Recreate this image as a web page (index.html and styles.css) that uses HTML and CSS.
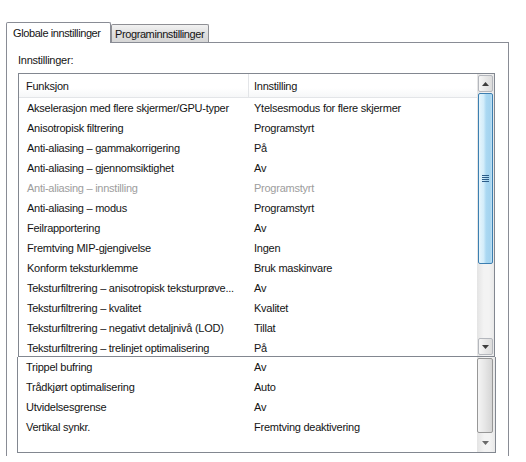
FILE: index.html
```html
<!DOCTYPE html>
<html>
<head>
<meta charset="utf-8">
<link rel="stylesheet" href="styles.css">
</head>
<body>
<div class="dialog">
  <div class="tabs">
    <div class="tab active">Globale innstillinger</div>
    <div class="tab inactive">Programinnstillinger</div>
  </div>
  <div class="panel">
    <div class="label">Innstillinger:</div>
    <div class="listbox main">
      <div class="list-body">
        <div class="list-head">
          <div class="hcell c1">Funksjon</div>
          <div class="hcell c2">Innstilling</div>
        </div>
        <div class="row"><span class="c1">Akselerasjon med flere skjermer/GPU-typer</span><span class="c2">Ytelsesmodus for flere skjermer</span></div>
        <div class="row"><span class="c1">Anisotropisk filtrering</span><span class="c2">Programstyrt</span></div>
        <div class="row"><span class="c1">Anti-aliasing – gammakorrigering</span><span class="c2">På</span></div>
        <div class="row"><span class="c1">Anti-aliasing – gjennomsiktighet</span><span class="c2">Av</span></div>
        <div class="row disabled"><span class="c1">Anti-aliasing – innstilling</span><span class="c2">Programstyrt</span></div>
        <div class="row"><span class="c1">Anti-aliasing – modus</span><span class="c2">Programstyrt</span></div>
        <div class="row"><span class="c1">Feilrapportering</span><span class="c2">Av</span></div>
        <div class="row"><span class="c1">Fremtving MIP-gjengivelse</span><span class="c2">Ingen</span></div>
        <div class="row"><span class="c1">Konform teksturklemme</span><span class="c2">Bruk maskinvare</span></div>
        <div class="row"><span class="c1">Teksturfiltrering – anisotropisk teksturprøve...</span><span class="c2">Av</span></div>
        <div class="row"><span class="c1">Teksturfiltrering – kvalitet</span><span class="c2">Kvalitet</span></div>
        <div class="row"><span class="c1">Teksturfiltrering – negativt detaljnivå (LOD)</span><span class="c2">Tillat</span></div>
        <div class="row"><span class="c1">Teksturfiltrering – trelinjet optimalisering</span><span class="c2">På</span></div>
      </div>
      <div class="scrollbar">
        <div class="sb-btn">
          <svg width="7" height="4" viewBox="0 0 7 4"><polygon points="0,4 7,4 3.5,0" fill="#3d3d3d"/></svg>
        </div>
        <div class="thumb blue">
          <svg width="7" height="7" viewBox="0 0 7 7">
            <rect x="0" y="0" width="7" height="1" fill="#2c5d89"/>
            <rect x="0" y="2" width="7" height="1" fill="#2c5d89"/>
            <rect x="0" y="4" width="7" height="1" fill="#2c5d89"/>
            <rect x="0" y="6" width="7" height="1" fill="#2c5d89"/>
          </svg>
        </div>
        <div class="sb-track"></div>
        <div class="sb-btn">
          <svg width="7" height="4" viewBox="0 0 7 4"><polygon points="0,0 7,0 3.5,4" fill="#3d3d3d"/></svg>
        </div>
      </div>
    </div>
    <div class="listbox lower">
      <div class="list-body">
        <div class="row"><span class="c1">Trippel bufring</span><span class="c2">Av</span></div>
        <div class="row"><span class="c1">Trådkjørt optimalisering</span><span class="c2">Auto</span></div>
        <div class="row"><span class="c1">Utvidelsesgrense</span><span class="c2">Av</span></div>
        <div class="row"><span class="c1">Vertikal synkr.</span><span class="c2">Fremtving deaktivering</span></div>
      </div>
      <div class="scrollbar">
        <div class="thumb gray"></div>
        <div class="sb-track"></div>
        <div class="sb-btn flat">
          <svg width="7" height="4" viewBox="0 0 7 4"><polygon points="0,0 7,0 3.5,4" fill="#6a6a6a"/></svg>
        </div>
      </div>
    </div>
  </div>
</div>
</body>
</html>
```

FILE: styles.css
```css
* {
  box-sizing: border-box;
}

body {
  margin: 0;
  background: #ffffff;
  font-family: "Liberation Sans", Arial, sans-serif;
  font-size: 11px;
  letter-spacing: -0.25px;
  color: #141414;
}

.dialog {
  padding: 22px 0 0 6px;
  width: 509px;
}

.tabs {
  display: flex;
  align-items: flex-end;
  height: 20px;
}

.tab {
  border: 1px solid #898c95;
  border-bottom: none;
  white-space: nowrap;
  letter-spacing: -0.4px;
}

.tab.active {
  position: relative;
  z-index: 1;
  width: 105px;
  height: 21px;
  margin-bottom: -1px;
  padding-left: 6px;
  line-height: 20px;
  background: #ffffff;
  border-radius: 2px 2px 0 0;
}

.tab.inactive {
  width: 98px;
  height: 18px;
  padding-left: 3px;
  line-height: 18px;
  background: linear-gradient(#f2f2f2, #e0e0e0 50%, #d6d6d6);
  border-color: #8e8f94;
  border-radius: 2px 2px 0 0;
}

.panel {
  width: 503px;
  border: 1px solid #898c95;
  border-bottom: none;
  padding: 10px 0 3px 11px;
  background: #ffffff;
}

.label {
  height: 15px;
  line-height: 15px;
  margin-bottom: 5px;
}

.listbox {
  display: flex;
  border: 1px solid #828790;
  background: #ffffff;
}

.listbox.main {
  width: 477px;
  height: 284px;
}

.listbox.lower {
  width: 479px;
  height: 96px;
  margin-left: -1px;
  border-top: none;
}

.list-body {
  flex: 1;
  overflow: hidden;
}

.list-head {
  display: grid;
  grid-template-columns: 229px 229px;
  height: 24px;
  border-bottom: 1px solid #e3e5e8;
  background: linear-gradient(#ffffff, #ffffff 60%, #f6f7f8);
}

.hcell {
  padding-top: 3px;
  line-height: 19px;
  white-space: nowrap;
}

.hcell.c1 {
  padding-left: 7px;
}

.hcell.c2 {
  border-left: 1px solid #e3e5e8;
  padding-left: 5px;
}

.row {
  display: grid;
  grid-template-columns: 229px 229px;
  height: 20px;
  line-height: 21px;
  white-space: nowrap;
}

.lower .row {
  grid-template-columns: 230px 229px;
}

.row .c1 {
  padding-left: 8px;
  overflow: hidden;
}

.row .c2 {
  padding-left: 6px;
  overflow: hidden;
}

.row.disabled {
  color: #9d9d9d;
}

.scrollbar {
  width: 17px;
  display: flex;
  flex-direction: column;
  padding: 1px;
  background: linear-gradient(to right, #e4e4e4, #f3f3f3 40%, #f3f3f3 70%, #e9e9e9);
}

.lower .scrollbar {
  width: 18px;
  padding: 1px 2px 1px 0;
}

.sb-btn {
  height: 17px;
  flex: none;
  display: flex;
  align-items: center;
  justify-content: center;
  border: 1px solid #b4b7bd;
  border-radius: 2px;
  background: linear-gradient(to right, #f6f6f6, #e8e8e8 50%, #dcdcdc);
}

.sb-btn.flat {
  border-color: transparent;
  background: transparent;
}

.thumb {
  flex: none;
  border-radius: 2px;
  display: flex;
  align-items: center;
  justify-content: center;
}

.thumb.blue {
  margin-top: 1px;
  height: 171px;
  border: 1px solid #3c7fb1;
  background: linear-gradient(to right, #e6f5fc, #d3edfa 35%, #aad8f2 55%, #a3d3ef 85%, #c4e3f5);
}

.thumb.gray {
  height: 75px;
  border: 1px solid #979797;
  background: linear-gradient(to right, #f4f4f4, #e6e6e6 50%, #d5d5d5);
}

.sb-track {
  flex: 1;
}
```
